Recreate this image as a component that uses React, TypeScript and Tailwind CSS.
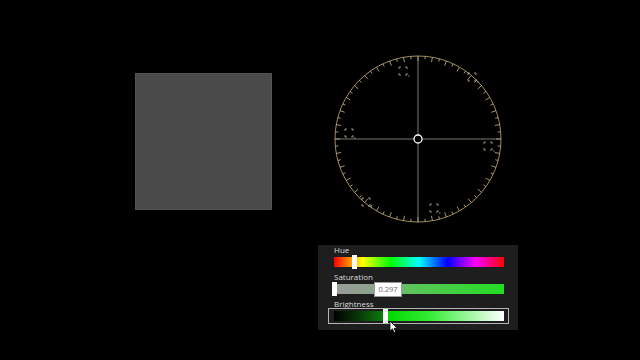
import React from "react";

const markers: [number, number][] = [
  [70, 17],
  [139, 23],
  [16, 79],
  [155, 92],
  [33, 148],
  [101, 154],
];

function Wheel() {
  const c = 85;
  const r = 83;
  const ticks = Array.from({ length: 72 }, (_, i) => {
    const a = (i * 5 * Math.PI) / 180;
    const len = i % 2 === 0 ? 5 : 3;
    return (
      <line
        key={i}
        x1={c + Math.cos(a) * r}
        y1={c + Math.sin(a) * r}
        x2={c + Math.cos(a) * (r - len)}
        y2={c + Math.sin(a) * (r - len)}
        stroke="#c8bc90"
        strokeWidth={0.8}
      />
    );
  });
  return (
    <svg width={170} height={170} viewBox="0 0 170 170" className="shrink-0">
      <circle cx={c} cy={c} r={r} fill="none" stroke="#b09a64" strokeWidth={0.9} />
      {ticks}
      <line x1={2} y1={c} x2={168} y2={c} stroke="#9a988a" strokeWidth={0.8} />
      <line x1={c} y1={2} x2={c} y2={168} stroke="#9a988a" strokeWidth={0.8} />
      {markers.map(([x, y], i) => (
        <g key={i} stroke="#d8d0b0" strokeWidth={0.8} fill="none" opacity={0.85}>
          <path d={`M${x - 4} ${y - 2} V${y - 4} H${x - 2}`} />
          <path d={`M${x + 2} ${y - 4} H${x + 4} V${y - 2}`} />
          <path d={`M${x - 4} ${y + 2} V${y + 4} H${x - 2}`} />
          <path d={`M${x + 2} ${y + 4} H${x + 4} V${y + 2}`} />
          <path d={`M${x + 5} ${y + 5} h1.5`} />
        </g>
      ))}
      <circle cx={c} cy={c} r={4} fill="#000" stroke="#ffffff" strokeWidth={1.3} />
    </svg>
  );
}

function Thumb({ left }: { left: number }) {
  return (
    <div
      className="absolute top-[-2px] h-[14px] w-[5px] bg-white"
      style={{ left }}
    />
  );
}

function Label({ children }: { children: React.ReactNode }) {
  return (
    <div className="h-[10px]">
      <div className="relative -top-[2px] text-[8px] leading-[10px] text-[#dcdcdc] [font-family:'Open_Sans',sans-serif]">
        {children}
      </div>
    </div>
  );
}

export default function App() {
  return (
    <div className="w-[640px] h-[360px] bg-black overflow-hidden flex flex-col [font-family:'Open_Sans',sans-serif]">
      <div className="flex pt-[54px]">
        <div className="ml-[135px] mt-[19px] w-[137px] h-[137px] bg-[#4a4a4a] border border-[#535353]" />
        <div className="ml-[61px]">
          <Wheel />
        </div>
      </div>

      <div className="ml-[318px] mt-[21px] w-[200px] h-[85px] bg-[#1e1e1e] pt-[2px] pl-[16px] pr-[14px] flex flex-col gap-[7px]">
        <div>
          <Label>Hue</Label>
          <div className="relative h-[10px] bg-[linear-gradient(to_right,#f00,#ff0,#0f0,#0ff,#00f,#f0f,#f00)]">
            <Thumb left={18} />
          </div>
        </div>
        <div>
          <Label>Saturation</Label>
          <div className="relative h-[10px] bg-[linear-gradient(to_right,#9a9a9a,#8aa48a_25%,#5cc45c_45%,#22dd22)]">
            <Thumb left={-2} />
            <div className="absolute left-[40px] top-[-2px] w-[28px] h-[15px] bg-white border border-[#9a9a9a] flex items-center justify-center text-[7.5px] text-[#6a6a6a]">
              0.297
            </div>
          </div>
        </div>
        <div>
          <Label>Brightness</Label>
          <div className="relative h-[10px] bg-[linear-gradient(to_right,#000,#083a08_15%,#0c7c0c_29%,#00d800_31%,#30ea30_55%,#a0f8a0_80%,#fff)]">
            <div className="absolute -left-[6px] -right-[5px] -top-[3px] -bottom-[3px] border border-[#b4b4b4]" />
            <Thumb left={49} />
            <svg
              width={10}
              height={14}
              viewBox="0 0 10 14"
              className="absolute left-[55px] top-[9px]"
            >
              <path
                d="M1 1 L1 11 L3.4 8.8 L5 12.5 L6.6 11.8 L5.1 8.3 L8.3 8.3 Z"
                fill="#fff"
                stroke="#000"
                strokeWidth={0.8}
              />
            </svg>
          </div>
        </div>
      </div>
    </div>
  );
}
